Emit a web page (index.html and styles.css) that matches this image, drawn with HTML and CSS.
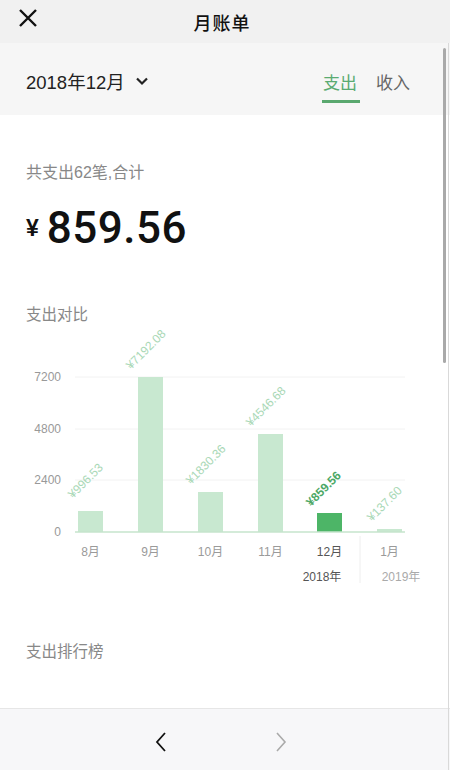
FILE: index.html
```html
<!DOCTYPE html>
<html lang="zh-CN">
<head>
    <meta charset="UTF-8">
    <meta name="viewport" content="width=device-width, initial-scale=1.0">
    <title>月账单</title>
    <link rel="stylesheet" href="styles.css">
</head>
<body>
    <div class="top-bar">
        <svg class="close-icon" width="20" height="20" viewBox="0 0 20 20">
            <path d="M2 2 L18 18 M18 2 L2 18" stroke="#111" stroke-width="2.4" fill="none"/>
        </svg>
        <h1 class="title">月账单</h1>
    </div>

    <div class="sub-bar">
        <div class="month-picker">
            <span>2018年12月</span>
            <svg width="14" height="10" viewBox="0 0 14 10">
                <path d="M2 2.5 L7 7.5 L12 2.5" stroke="#222" stroke-width="2.2" fill="none"/>
            </svg>
        </div>
        <div class="tabs">
            <span class="tab active">支出</span>
            <span class="tab">收入</span>
        </div>
    </div>

    <div class="content">
        <p class="summary">共支出62笔,合计</p>
        <div class="amount"><span class="yen">¥</span><span class="num">859.56</span></div>

        <h2 class="section-title">支出对比</h2>

        <svg class="chart" width="450" height="270" viewBox="0 0 450 270">
            <g transform="translate(0,-320)">
                <!-- grid -->
                <line x1="75" y1="376" x2="405" y2="376" class="grid"/>
                <line x1="75" y1="428" x2="405" y2="428" class="grid"/>
                <line x1="75" y1="479" x2="405" y2="479" class="grid"/>
                <text x="61" y="380" class="axis">7200</text>
                <text x="61" y="432" class="axis">4800</text>
                <text x="61" y="483" class="axis">2400</text>
                <text x="61" y="535" class="axis">0</text>

                <!-- bars -->
                <rect x="78" y="510" width="25" height="21" class="bar"/>
                <rect x="138" y="376" width="25" height="155" class="bar"/>
                <rect x="198" y="491" width="25" height="40" class="bar"/>
                <rect x="258" y="433" width="25" height="98" class="bar"/>
                <rect x="317" y="512" width="25" height="19" class="bar current"/>
                <rect x="377" y="528" width="25" height="3" class="bar"/>
                <line x1="75" y1="531" x2="405" y2="531" class="baseline"/>

                <!-- values -->
                <text transform="translate(73,498) rotate(-45)" class="value">¥996.53</text>
                <text transform="translate(131,369) rotate(-45)" class="value">¥7192.08</text>
                <text transform="translate(191,484) rotate(-45)" class="value">¥1830.36</text>
                <text transform="translate(251,426) rotate(-45)" class="value">¥4546.68</text>
                <text transform="translate(311,506) rotate(-45)" class="value current">¥859.56</text>
                <text transform="translate(372,521) rotate(-45)" class="value">¥137.60</text>

                <!-- months -->
                <text x="90.5" y="555" class="month">8月</text>
                <text x="150.5" y="555" class="month">9月</text>
                <text x="210.5" y="555" class="month">10月</text>
                <text x="270.5" y="555" class="month">11月</text>
                <text x="329.5" y="555" class="month current">12月</text>
                <text x="389.5" y="555" class="month">1月</text>
                <line x1="360" y1="535" x2="360" y2="582" class="divider"/>
                <text x="322" y="580" class="year current">2018年</text>
                <text x="401" y="580" class="year">2019年</text>
            </g>
        </svg>

        <h2 class="section-title rank-title">支出排行榜</h2>
    </div>

    <div class="bottom-bar">
        <svg width="14" height="22" viewBox="0 0 14 22">
            <path d="M11 2 L3 11 L11 20" stroke="#111" stroke-width="1.8" fill="none"/>
        </svg>
        <svg width="14" height="22" viewBox="0 0 14 22">
            <path d="M3 2 L11 11 L3 20" stroke="#aaa" stroke-width="1.6" fill="none"/>
        </svg>
    </div>

    <div class="scroll-edge"></div>
    <div class="scroll-thumb"></div>
</body>
</html>
```

FILE: styles.css
```css
body {
    margin: 0;
    font-family: "Liberation Sans", "Noto Sans CJK SC", sans-serif;
    background-color: #fff;
    color: #222;
    height: 770px;
    overflow: hidden;
}

.top-bar {
    height: 43px;
    background-color: #f1f1f1;
    display: flex;
    align-items: center;
    justify-content: center;
    position: relative;
}

.close-icon {
    position: absolute;
    left: 18px;
    top: 8px;
}

.title {
    margin: 0;
    font-size: 18px;
    font-weight: 500;
    color: #111;
    letter-spacing: 1px;
    margin-left: -6px;
}

.sub-bar {
    height: 72px;
    background-color: #f6f6f6;
    display: flex;
    align-items: center;
    justify-content: space-between;
    padding: 0 40px 0 26px;
}

.month-picker {
    display: flex;
    align-items: center;
    gap: 10px;
    font-size: 18.5px;
    color: #222;
    margin-top: 4px;
}

.tabs {
    display: flex;
    gap: 19px;
    margin-top: 4px;
}

.tab {
    font-size: 17px;
    color: #666;
    position: relative;
}

.tab.active {
    color: #5aab71;
}

.tab.active::after {
    content: "";
    position: absolute;
    left: -1px;
    right: -3px;
    bottom: -9px;
    height: 3px;
    background-color: #5aa86f;
}

.content {
    padding-left: 26px;
}

.summary {
    margin: 48px 0 0;
    font-size: 16px;
    line-height: 20px;
    color: #888;
}

.amount {
    margin-top: 19px;
    height: 50px;
    white-space: nowrap;
}

.yen {
    font-size: 23px;
    font-weight: 700;
    color: #111;
    vertical-align: 7px;
    margin-right: 8px;
}

.num {
    font-family: Roboto, "Liberation Sans", sans-serif;
    font-size: 44px;
    font-weight: 500;
    color: #111;
    letter-spacing: 0.5px;
}

.section-title {
    margin: 0;
    font-size: 15.5px;
    font-weight: 400;
    line-height: 20px;
    color: #888;
}

.content > .section-title:first-of-type {
    margin-top: 53px;
}

.chart {
    display: block;
    margin-left: -26px;
    margin-top: -4px;
}

.grid {
    stroke: #f2f2f2;
    stroke-width: 1;
}

.baseline {
    stroke: #c6e5cd;
    stroke-width: 1.5;
}

.divider {
    stroke: #eeeeee;
    stroke-width: 1;
}

.axis {
    font-size: 12px;
    fill: #999;
    text-anchor: end;
}

.bar {
    fill: #c8e8d0;
}

.bar.current {
    fill: #4db567;
}

.value {
    font-size: 12px;
    fill: #a9d8b6;
}

.value.current {
    fill: #4ca866;
    font-weight: 700;
}

.month {
    font-size: 12px;
    fill: #9a9a9a;
    text-anchor: middle;
}

.month.current {
    fill: #555;
}

.year {
    font-size: 12px;
    fill: #aaa;
    text-anchor: middle;
}

.year.current {
    fill: #555;
}

.rank-title {
    margin-top: 51px;
}

.bottom-bar {
    position: fixed;
    left: 0;
    right: 0;
    bottom: 0;
    height: 62px;
    background-color: #f7f7f9;
    border-top: 1px solid #e6e6e6;
    display: flex;
    align-items: center;
    justify-content: center;
    gap: 106px;
    padding-right: 8px;
    padding-top: 4px;
    box-sizing: border-box;
}

.scroll-edge {
    position: fixed;
    top: 43px;
    bottom: 0;
    right: 1px;
    width: 1px;
    background-color: #d9d9d9;
}

.scroll-thumb {
    position: fixed;
    top: 48px;
    right: 4px;
    width: 3px;
    height: 315px;
    border-radius: 2px;
    background-color: #a9a9a9;
}
```
